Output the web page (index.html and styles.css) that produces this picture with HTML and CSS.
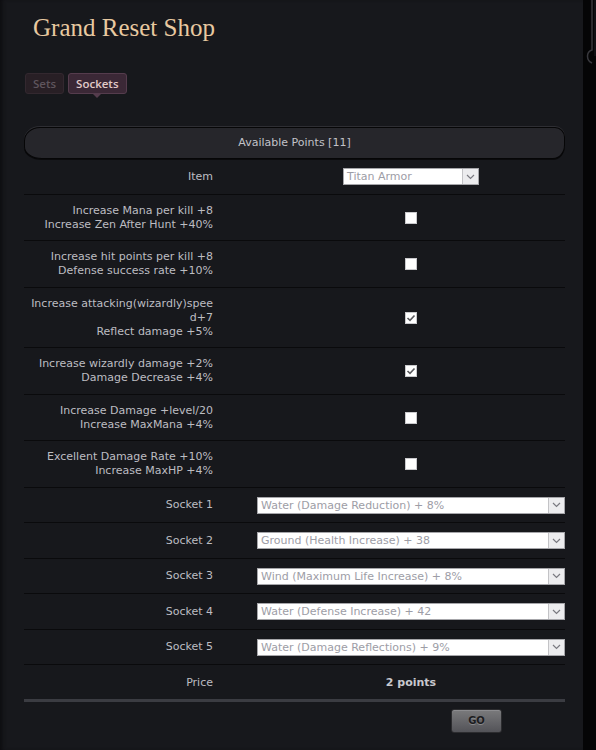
FILE: index.html
```html
<!DOCTYPE html>
<html lang="en">
<head>
<meta charset="utf-8">
<title>Grand Reset Shop</title>
<link rel="stylesheet" href="styles.css">
</head>
<body>
<div class="page">
  <main class="panel">
    <h1 class="title">Grand Reset Shop</h1>
    <nav class="tabs">
      <span class="tab">Sets</span>
      <span class="tab tab-active">Sockets</span>
    </nav>
    <section class="shop">
      <div class="points-bar">Available Points [11]</div>
      <table class="form">
        <tr class="row-single">
          <td class="label">Item</td>
          <td class="field">
            <span class="select select-item"><span class="select-text">Titan Armor</span><span class="select-btn"><svg width="9" height="6" viewBox="0 0 9 6"><path d="M1 1 L4.5 4.5 L8 1" fill="none" stroke="#7a7a80" stroke-width="1.2"/></svg></span></span>
          </td>
        </tr>
        <tr>
          <td class="label">Increase Mana per kill +8<br>Increase Zen After Hunt +40%</td>
          <td class="field"><span class="check"></span></td>
        </tr>
        <tr>
          <td class="label">Increase hit points per kill +8<br>Defense success rate +10%</td>
          <td class="field"><span class="check"></span></td>
        </tr>
        <tr>
          <td class="label"><span class="wrap">Increase attacking(wizardly)speed+7</span><br>Reflect damage +5%</td>
          <td class="field"><span class="check checked"><svg width="10" height="8" viewBox="0 0 10 8"><path d="M1.5 4 L4 6.3 L8.5 1.5" fill="none" stroke="#5a5a5e" stroke-width="1.6"/></svg></span></td>
        </tr>
        <tr>
          <td class="label">Increase wizardly damage +2%<br>Damage Decrease +4%</td>
          <td class="field"><span class="check checked"><svg width="10" height="8" viewBox="0 0 10 8"><path d="M1.5 4 L4 6.3 L8.5 1.5" fill="none" stroke="#5a5a5e" stroke-width="1.6"/></svg></span></td>
        </tr>
        <tr>
          <td class="label">Increase Damage +level/20<br>Increase MaxMana +4%</td>
          <td class="field"><span class="check"></span></td>
        </tr>
        <tr>
          <td class="label">Excellent Damage Rate +10%<br>Increase MaxHP +4%</td>
          <td class="field"><span class="check"></span></td>
        </tr>
        <tr class="row-single">
          <td class="label">Socket 1</td>
          <td class="field"><span class="select select-wide"><span class="select-text">Water (Damage Reduction) + 8%</span><span class="select-btn"><svg width="9" height="6" viewBox="0 0 9 6"><path d="M1 1 L4.5 4.5 L8 1" fill="none" stroke="#7a7a80" stroke-width="1.2"/></svg></span></span></td>
        </tr>
        <tr class="row-single">
          <td class="label">Socket 2</td>
          <td class="field"><span class="select select-wide"><span class="select-text">Ground (Health Increase) + 38</span><span class="select-btn"><svg width="9" height="6" viewBox="0 0 9 6"><path d="M1 1 L4.5 4.5 L8 1" fill="none" stroke="#7a7a80" stroke-width="1.2"/></svg></span></span></td>
        </tr>
        <tr class="row-single">
          <td class="label">Socket 3</td>
          <td class="field"><span class="select select-wide"><span class="select-text">Wind (Maximum Life Increase) + 8%</span><span class="select-btn"><svg width="9" height="6" viewBox="0 0 9 6"><path d="M1 1 L4.5 4.5 L8 1" fill="none" stroke="#7a7a80" stroke-width="1.2"/></svg></span></span></td>
        </tr>
        <tr class="row-single">
          <td class="label">Socket 4</td>
          <td class="field"><span class="select select-wide"><span class="select-text">Water (Defense Increase) + 42</span><span class="select-btn"><svg width="9" height="6" viewBox="0 0 9 6"><path d="M1 1 L4.5 4.5 L8 1" fill="none" stroke="#7a7a80" stroke-width="1.2"/></svg></span></span></td>
        </tr>
        <tr class="row-single">
          <td class="label">Socket 5</td>
          <td class="field"><span class="select select-wide"><span class="select-text">Water (Damage Reflections) + 9%</span><span class="select-btn"><svg width="9" height="6" viewBox="0 0 9 6"><path d="M1 1 L4.5 4.5 L8 1" fill="none" stroke="#7a7a80" stroke-width="1.2"/></svg></span></span></td>
        </tr>
        <tr class="row-single row-price">
          <td class="label">Price</td>
          <td class="field price">2 points</td>
        </tr>
      </table>
      <div class="actions"><button class="go" type="button">GO</button></div>
    </section>
  </main>
  <aside class="edge">
    <svg width="13" height="70" viewBox="0 0 13 70"><path d="M9 0 V50 C3 52 3 60 9 63" fill="none" stroke="#38383d" stroke-width="1.5"/><path d="M12 0 V56" fill="none" stroke="#1e1e22" stroke-width="1"/></svg>
  </aside>
</div>
</body>
</html>
```
FILE: styles.css
```css
html, body {
  margin: 0;
  padding: 0;
  background: #050506;
}
body {
  font-family: "DejaVu Sans", "Liberation Sans", sans-serif;
  font-size: 11px;
  color: #bdbdc2;
}
.page {
  display: flex;
  width: 596px;
  height: 750px;
  overflow: hidden;
}
.panel {
  width: 583px;
  flex: none;
  background: #17181c;
  box-shadow: inset 4px 0 4px -2px #0c0c0f;
}
.edge {
  flex: 1;
  background: #050506;
}
.edge svg { display: block; }
.title {
  margin: 0;
  padding: 13px 0 0 33px;
  font-family: "Liberation Serif", "Times New Roman", serif;
  font-weight: normal;
  font-size: 25px;
  line-height: 30px;
  color: #e8c9a0;
}
.tabs {
  display: flex;
  gap: 4px;
  margin: 30px 0 0 25px;
}
.tab {
  position: relative;
  height: 19px;
  line-height: 19px;
  padding: 0 7px;
  border: 1px solid #33282f;
  border-radius: 3px;
  background: #281f25;
  font-family: "Open Sans", "Liberation Sans", sans-serif;
  font-weight: 600;
  font-size: 11.5px;
  color: #5f555d;
}
.tab-active {
  background: #3b2836;
  border-color: #553c4d;
  color: #e2cbc9;
}
.tab-active::after {
  content: "";
  position: absolute;
  left: 50%;
  bottom: -5px;
  margin-left: -4px;
  border-left: 4px solid transparent;
  border-right: 4px solid transparent;
  border-top: 4px solid #553c4d;
}
.shop {
  width: 541px;
  margin: 33px 0 0 24px;
}
.points-bar {
  height: 30px;
  line-height: 30px;
  text-align: center;
  background: #26262b;
  border: 1px solid #060607;
  border-radius: 16px 10px 12px 18px / 14px 10px 14px 12px;
  box-shadow: 0 -1px 0 #2e2e33, 0 1px 0 #0a0a0c;
  color: #c2c2c8;
}
.form {
  width: 541px;
  border-collapse: collapse;
}
.form td {
  border-bottom: 1px solid #0a0a0c;
  line-height: 14px;
  padding: 9px 0 8.5px;
}
.label {
  width: 180px;
  padding-left: 9px !important;
  padding-right: 44px !important;
  text-align: right;
  vertical-align: middle;
}
.wrap {
  display: inline-block;
  width: 185px;
  margin-left: -5px;
  word-break: break-all;
}
.field {
  text-align: center;
  vertical-align: middle;
}
.row-single td {
  height: 17px;
}
.row-price td {
  border-bottom: 3px solid #3b3c42;
  padding: 9px 0 7.5px;
}
.price {
  font-weight: bold;
  color: #c8c8ce;
}
.check {
  display: inline-flex;
  align-items: center;
  justify-content: center;
  width: 10px;
  height: 10px;
  border: 1px solid #c9c9cc;
  background: #ffffff;
  vertical-align: middle;
}
.check svg { display: block; }
.select {
  display: inline-flex;
  height: 15px;
  border: 1px solid #a6a6aa;
  background: #ffffff;
  vertical-align: middle;
  text-align: left;
}
.select-item { width: 134px; }
.select-wide { width: 306px; }
.select-text {
  flex: 1;
  padding-left: 3px;
  line-height: 15px;
  color: #9d9da6;
  white-space: nowrap;
  overflow: hidden;
}
.select-btn {
  width: 15px;
  display: flex;
  align-items: center;
  justify-content: center;
  background: #ececee;
  border-left: 1px solid #c3c3c6;
}
.actions {
  display: flex;
  padding: 7px 0 0 427px;
}
.go {
  width: 51px;
  height: 24px;
  border: 1px solid #2c2c2f;
  border-radius: 3px;
  background: linear-gradient(#7a7a7c, #535358);
  box-shadow: inset 0 1px 0 #8c8c8f;
  font-family: "DejaVu Sans", sans-serif;
  font-weight: bold;
  font-size: 10px;
  color: #1c1c1e;
  text-shadow: 0 1px 0 #8a8a8c;
  padding: 0;
}
```
